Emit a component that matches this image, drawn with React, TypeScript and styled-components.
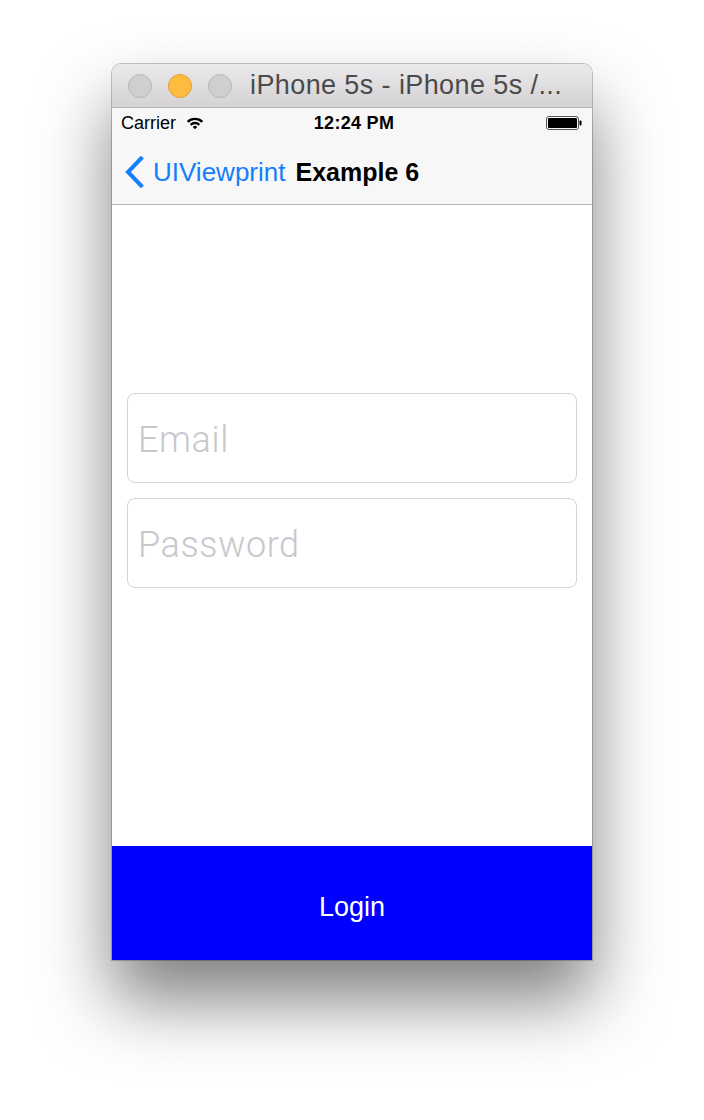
import styled, { createGlobalStyle } from 'styled-components';

const GlobalStyle = createGlobalStyle`
  html, body {
    margin: 0;
    padding: 0;
    background: #ffffff;
  }
`;

const Page = styled.div`
  width: 704px;
  height: 1120px;
  display: flex;
  flex-direction: column;
  align-items: center;
  padding-top: 64px;
  box-sizing: border-box;
  overflow: hidden;
`;

const Window = styled.div`
  width: 480px;
  display: flex;
  flex-direction: column;
  border-radius: 9px 9px 0 0;
  overflow: hidden;
  box-shadow: 0 0 0 1px rgba(0, 0, 0, 0.22), 0 40px 70px rgba(0, 0, 0, 0.5);
`;

const TitleBar = styled.div`
  height: 43px;
  display: flex;
  align-items: center;
  padding-left: 16px;
  gap: 16px;
  background: linear-gradient(#ebe9eb, #d4d2d4);
  border-bottom: 1px solid #b1b1b1;
`;

const Light = styled.span<{ $color: string; $border: string }>`
  width: 24px;
  height: 24px;
  border-radius: 50%;
  background: ${({ $color }) => $color};
  border: 1px solid ${({ $border }) => $border};
  box-sizing: border-box;
`;

const WindowTitle = styled.span`
  margin-left: 2px;
  font-family: 'Liberation Sans', Arial, sans-serif;
  font-size: 27px;
  letter-spacing: 0.4px;
  color: #4b4b4b;
  white-space: nowrap;
`;

const Screen = styled.div`
  height: 852px;
  display: flex;
  flex-direction: column;
  background: #ffffff;
`;

const StatusBar = styled.div`
  height: 30px;
  display: grid;
  grid-template-columns: 1fr auto 1fr;
  align-items: center;
  padding: 0 9px;
  background: #f7f7f7;
  font-family: 'Liberation Sans', Arial, sans-serif;
  font-size: 18px;
  color: #000;
`;

const Carrier = styled.div`
  display: flex;
  align-items: center;
  gap: 10px;
`;

const Clock = styled.div`
  font-weight: bold;
  letter-spacing: 0.3px;
  padding-left: 4px;
`;

const BatteryWrap = styled.div`
  display: flex;
  justify-content: flex-end;
  padding-right: 1px;
`;

const NavBar = styled.div`
  height: 67px;
  display: flex;
  align-items: center;
  padding: 2px 0 0 12px;
  background: #f7f7f7;
  border-bottom: 1px solid #b2b2b2;
  box-sizing: border-box;
  font-family: 'Liberation Sans', Arial, sans-serif;
  font-size: 26px;
`;

const BackButton = styled.div`
  display: flex;
  align-items: center;
  gap: 9px;
  color: #157efb;
`;

const NavTitle = styled.div`
  margin-left: 10px;
  font-size: 25px;
  font-weight: bold;
  color: #000;
`;

const Body = styled.div`
  flex: 1;
  display: flex;
  flex-direction: column;
  gap: 15px;
  padding: 188px 15px 0;
`;

const Field = styled.input`
  height: 90px;
  box-sizing: border-box;
  border: 1px solid #d3d3d3;
  border-radius: 8px;
  padding: 4px 10px 0;
  font-family: Roboto, 'Liberation Sans', sans-serif;
  font-weight: 300;
  font-size: 36px;
  letter-spacing: 0.6px;
  color: #000;
  outline: none;
  background: #fff;

  &::placeholder {
    color: #c7c7cd;
  }
`;

const LoginButton = styled.button`
  height: 114px;
  border: none;
  padding: 8px 0 0;
  background: #0000ff;
  color: #ffffff;
  font-family: 'Liberation Sans', Arial, sans-serif;
  font-size: 27px;
  cursor: pointer;
`;

const Wifi = () => (
  <svg width="18" height="14" viewBox="0 0 17 13">
    <path d="M0.8 4.6 A11 11 0 0 1 16.2 4.6 L14.6 6.2 A8.8 8.8 0 0 0 2.4 6.2 Z" fill="#000" />
    <path d="M3.6 7.4 A7 7 0 0 1 13.4 7.4 L11.8 9 A4.8 4.8 0 0 0 5.2 9 Z" fill="#000" />
    <path d="M6.4 10.2 A3 3 0 0 1 10.6 10.2 L8.5 12.4 Z" fill="#000" />
  </svg>
);

const Battery = () => (
  <svg width="36" height="14" viewBox="0 0 36 14">
    <rect x="0.5" y="0.5" width="32" height="13" rx="2.5" fill="none" stroke="#555" />
    <rect x="2" y="2" width="29" height="10" rx="1" fill="#000" />
    <rect x="33.5" y="4.5" width="2" height="5" rx="0.8" fill="#000" />
  </svg>
);

const Chevron = () => (
  <svg width="20" height="32" viewBox="0 0 20 32">
    <path d="M17 2.5 L4 16 L17 29.5" fill="none" stroke="#157efb" strokeWidth="4" strokeLinecap="square" />
  </svg>
);

export default function App() {
  return (
    <Page>
      <GlobalStyle />
      <Window>
        <TitleBar>
          <Light $color="#d0ced0" $border="#b8b6b8" />
          <Light $color="#fdbc40" $border="#e0a131" />
          <Light $color="#d0ced0" $border="#b8b6b8" />
          <WindowTitle>iPhone 5s - iPhone 5s /...</WindowTitle>
        </TitleBar>
        <Screen>
          <StatusBar>
            <Carrier>
              Carrier
              <Wifi />
            </Carrier>
            <Clock>12:24 PM</Clock>
            <BatteryWrap>
              <Battery />
            </BatteryWrap>
          </StatusBar>
          <NavBar>
            <BackButton>
              <Chevron />
              UIViewprint
            </BackButton>
            <NavTitle>Example 6</NavTitle>
          </NavBar>
          <Body>
            <Field type="email" placeholder="Email" />
            <Field type="password" placeholder="Password" />
          </Body>
          <LoginButton>Login</LoginButton>
        </Screen>
      </Window>
    </Page>
  );
}
